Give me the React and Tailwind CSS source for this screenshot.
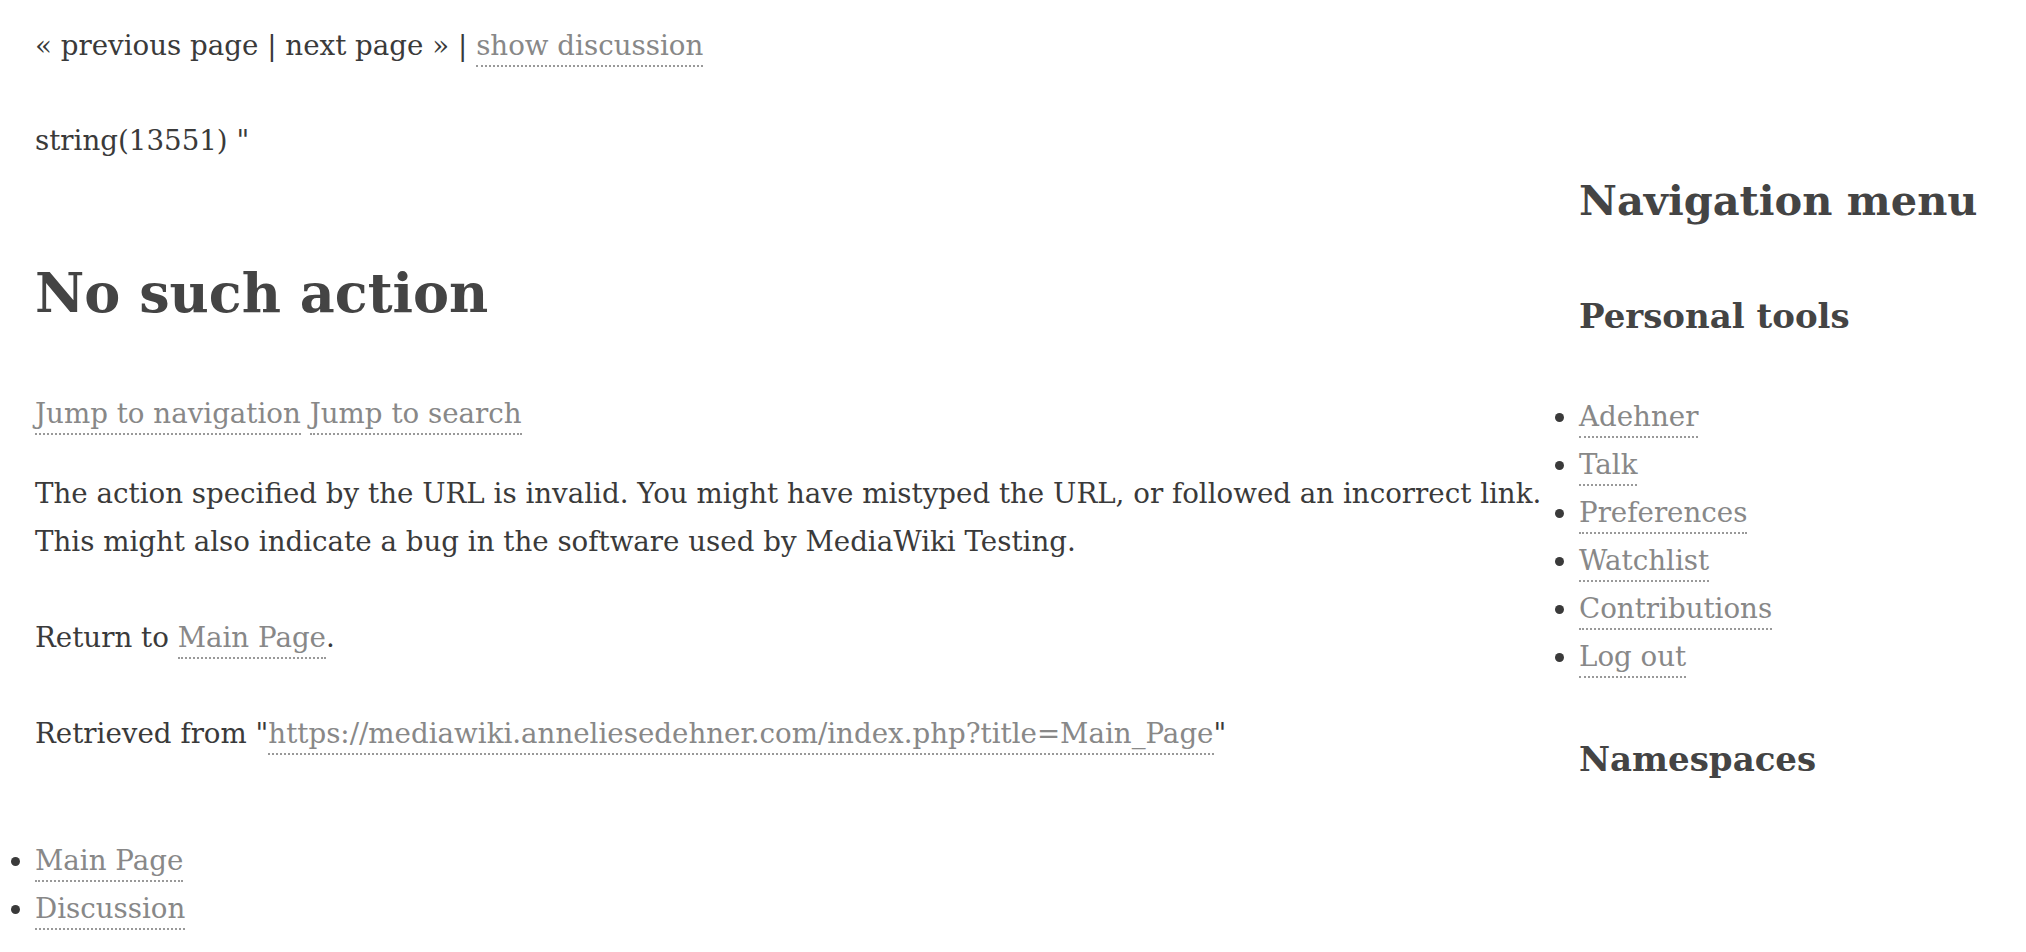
const serif = "font-['DejaVu_Serif','Liberation_Serif',serif]";

const Link = ({ children }) => (
    <a href="#" className="text-[#888] border-b-2 border-dotted border-[#999] pb-[3px]">
        {children}
    </a>
);

const personalTools = ["Adehner", "Talk", "Preferences", "Watchlist", "Contributions", "Log out"];

const App = () => {
    return (
        <div className={`${serif} bg-white text-[#3a3a3a] text-[27.7px] leading-[48px] min-h-[952px] flex`}>
            {/* Content */}
            <div className="flex-1 pl-[35px] pt-[22px]">
                <p>
                    « previous page | next page » | <Link>show discussion</Link>
                </p>
                <p className="mt-[47px]">string(13551) "</p>

                <h1 className="mt-[97px] text-[54px] leading-[62px] font-bold text-[#444]">No such action</h1>

                <div className="mt-[66px]">
                    <Link>Jump to navigation</Link> <Link>Jump to search</Link>
                </div>

                <p className="mt-[32px] whitespace-nowrap">
                    The action specified by the URL is invalid. You might have mistyped the URL, or followed an incorrect link.
                    <br />
                    This might also indicate a bug in the software used by MediaWiki Testing.
                </p>

                <p className="mt-[48px]">
                    Return to <Link>Main Page</Link>.
                </p>

                <p className="mt-[48px]">
                    Retrieved from "<Link>https://mediawiki.anneliesedehner.com/index.php?title=Main_Page</Link>"
                </p>

                <ul className="mt-[79px] -ml-[35px] pl-[35px] list-disc">
                    <li><Link>Main Page</Link></li>
                    <li><Link>Discussion</Link></li>
                </ul>
            </div>

            {/* Sidebar */}
            <div className="w-[447px] shrink-0 pt-[177px]">
                <h2 className="text-[41.5px] leading-[48px] font-bold text-[#444]">Navigation menu</h2>
                <h3 className="mt-[72px] text-[34px] leading-[38px] font-bold text-[#444]">Personal tools</h3>
                <ul className="mt-[58px] list-disc">
                    {personalTools.map((item) => (
                        <li key={item}><Link>{item}</Link></li>
                    ))}
                </ul>
                <h3 className="mt-[59px] text-[34px] leading-[38px] font-bold text-[#444]">Namespaces</h3>
            </div>
        </div>
    );
};

export default App;
